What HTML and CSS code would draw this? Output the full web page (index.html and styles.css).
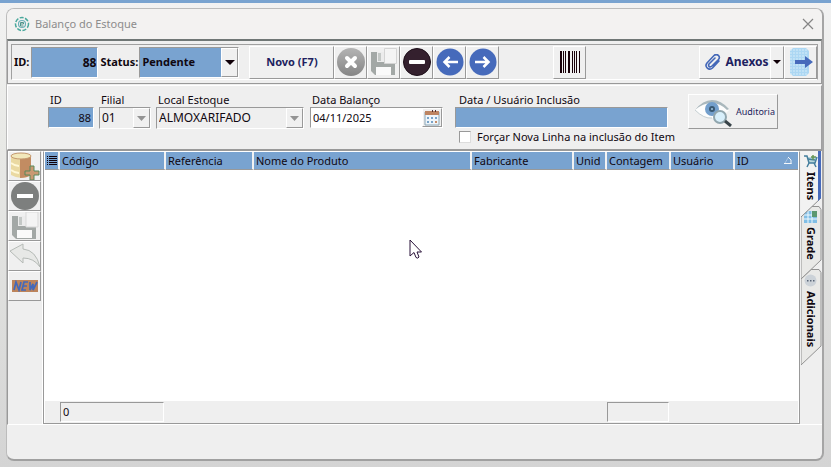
FILE: index.html
```html
<!DOCTYPE html>
<html lang="pt-BR">
<head>
<meta charset="utf-8">
<meta name="viewport" content="width=device-width, initial-scale=1">
<title>Balanço do Estoque</title>
<link rel="stylesheet" href="styles.css">
</head>
<body>
<main class="window">
  <header class="titlebar">
    <svg class="logo" width="16" height="16" viewBox="0 0 16 16" fill="none"><circle cx="8" cy="8" r="6.5" stroke="#4aa89c" stroke-width="1.5" stroke-dasharray="4 1.5"/><circle cx="8" cy="8" r="3.5" stroke="#6bb0b8" stroke-width="1.2"/><path d="M6.5 8h3v-1.500h-3zv2h3" stroke="#4c938a"/></svg>
    <h1>Balanço do Estoque</h1>
    <button class="close" aria-label="Fechar"><svg width="12" height="12" viewBox="0 0 12 12"><path d="M1 1l10 10M11 1L1 11" stroke="#858585" stroke-width="1.200"/></svg></button>
  </header>

  <section class="toolbar-frame">
    <div class="toolbar">
      <label class="strong" for="record">ID:</label>
      <input class="record" id="record" value="88">
      <label class="strong status-label" for="status">Status:</label>
      <span class="select-box status">
        <select id="status"><option>Pendente</option></select>
        <span class="arrow"><svg width="10" height="5" viewBox="0 0 10 5"><path d="M0 0h10L5 5z" fill="#100008"/></svg></span>
      </span>
      <div class="group main-group">
        <button class="tool novo">Novo (F7)</button>
        <button class="tool" aria-label="Cancelar"><svg width="28" height="28" viewBox="0 0 28 28"><defs><linearGradient id="g" x2="0" y2="1"><stop stop-color="#b4b4b4"/><stop offset="1" stop-color="#858585"/></linearGradient></defs><circle cx="14" cy="14" r="14" fill="url(#g)"/><path d="M10 10l8 8M18 10l-8 8" stroke="#fff" stroke-width="4" stroke-linecap="round"/></svg></button>
        <button class="tool" aria-label="Salvar"><svg width="28" height="28" viewBox="0 0 28 28"><path d="M1 4h24v23H5l-4-4z" fill="#a3a8a6"/><path d="M7 4h8v10H7z" fill="#ececec"/><path d="M8 5h3v8H8z" fill="#c4c8c6"/><path d="M6 19h15v8H6z" fill="#fafafa"/><path d="M14.500 .5h12v15h-12z" fill="#f4f4f4" stroke="#d4d4d4"/></svg></button>
        <button class="tool" aria-label="Excluir"><svg width="28" height="28" viewBox="0 0 28 28"><circle cx="14" cy="14" r="13.500" fill="#34202e" stroke="#1c0d18"/><rect x="6" y="12" width="16" height="4" rx="1" fill="#fff"/></svg></button>
        <button class="tool" aria-label="Anterior"><svg width="28" height="28" viewBox="0 0 28 28"><circle cx="14" cy="14" r="13.500" fill="#466abb"/><path d="M22 14H9M13.500 9L8.500 14l5 5" fill="none" stroke="#fff" stroke-width="2.500"/></svg></button>
        <button class="tool" aria-label="Próximo"><svg width="28" height="28" viewBox="0 0 28 28"><circle cx="14" cy="14" r="13.500" fill="#466abb"/><path d="M6 14h13M14.500 9l5 5-5 5" fill="none" stroke="#fff" stroke-width="2.500"/></svg></button>
      </div>
      <button class="tool barcode" aria-label="Código de barras"><svg width="20" height="22" viewBox="0 0 20 22"><path d="M0 0h2v22H0zM3 0h1v22H3zM5 0h1v22H5zM8 0h2v22H8zM12 0h1v22h-1zM14 0h1v22h-1zM16 0h1v22h-1zM19 0h1v22h-1z" fill="#180008"/></svg></button>
      <div class="group end-group">
        <button class="tool anexos"><svg width="16" height="16" viewBox="0 0 16 16" fill="none" stroke="#4468b8" stroke-width="1.600" stroke-linecap="round"><path d="M14 7l-6.500 7C4 17-1 13 2 9l7-7.500c3-2.500 7 1 4.500 4L7 12c-2 2-4.500 0-3-2l6-6M12 8l-3 3.500"/></svg><span>Anexos</span></button>
        <button class="tool more" aria-label="Mais anexos"><svg width="8" height="4" viewBox="0 0 8 4"><path d="M0 0h8L4 4z" fill="#100008"/></svg></button>
        <button class="tool" aria-label="Sair"><svg width="24" height="28" viewBox="0 0 24 28"><path d="M1 3l3-3h13l3 3v22l-3 3H4l-3-3z" fill="#acd7f3"/><path d="M2 1v26M5 1v26M8 1v26M11 1v26M14 1v26M17 1v26" stroke="#d5ecf8" stroke-dasharray="2 1"/><path d="M6 12h10V8l8 6-8 6v-4H6z" fill="#466abb"/></svg></button>
      </div>
    </div>
  </section>

  <section class="form">
    <div class="field f-id"><label for="fid">ID</label><input id="fid" class="sunken blue right" value="88"></div>
    <div class="field f-filial"><label for="filial">Filial</label><span class="select-box"><select id="filial" disabled><option>01</option></select><span class="arrow"><svg width="9" height="5" viewBox="0 0 9 5"><path d="M0 0h9L4.500 5z" fill="#939393"/></svg></span></span></div>
    <div class="field f-local"><label for="local">Local Estoque</label><span class="select-box"><select id="local" disabled><option>ALMOXARIFADO</option></select><span class="arrow"><svg width="9" height="5" viewBox="0 0 9 5"><path d="M0 0h9L4.500 5z" fill="#939393"/></svg></span></span></div>
    <div class="field f-data"><label for="data">Data Balanço</label>
      <div class="date"><input id="data" value="04/11/2025"><button aria-label="Abrir calendário"><svg width="16" height="16" viewBox="0 0 16 16"><path d="M1 2h14v13H1z" fill="#eef5fa" stroke="#8aa5b5"/><path d="M1 1h14v4H1z" fill="#bd8461"/><path d="M8 0h1v2H8zM11 0h1v2h-1z" fill="#503030"/><path d="M3 7h2v2H3zM7 7h2v2H7zM11 7h2v2h-2zM3 11h2v2H3zM7 11h2v2H7z" fill="#79a3c8"/><path d="M11 11h2v2h-2z" fill="#c58c69"/></svg></button></div>
    </div>
    <div class="inclusion">
      <div class="field"><label for="incl">Data / Usuário Inclusão</label><input id="incl" class="sunken blue"></div>
      <label class="check"><input type="checkbox"><span>Forçar Nova Linha na inclusão do Item</span></label>
    </div>
    <button class="audit"><svg width="38" height="30" viewBox="0 0 38 30"><path d="M1 13Q10 4 18 5t17 8Q28 22 17 21 8 20 1 13z" fill="#fdfdfd"/><path d="M1 13Q9 3 18 3t17 9l-2 1Q26 6 18 6 9 6 1 13z" fill="#aab8bd"/><path d="M1 13q9 9 17 8" fill="none" stroke="#c5cfd2"/><circle cx="18" cy="12" r="7" fill="#739fcc"/><circle cx="18" cy="12" r="3" fill="#395872"/><circle cx="18" cy="12" r="1" fill="#a1c5e1"/><circle cx="26" cy="20" r="6" fill="#d8effb" stroke="#91a6ae" stroke-width="2"/><path d="M31 24l6 5" stroke="#394449" stroke-width="3"/></svg><span>Auditoria</span></button>
  </section>

  <section class="work">
    <nav class="side">
      <button class="tool" aria-label="Inserir item"><svg width="30" height="28" viewBox="0 0 30 28"><path d="M1 4q9-6 20 0v19q-9 6-20 0z" fill="#ead9a2"/><path d="M10 5h11v18q-4 3-11 3z" fill="#c28c62"/><ellipse cx="11" cy="4" rx="10" ry="3" fill="#f2e8bb" stroke="#c59a70"/><path d="M1 11q4 3 8 3M1 18q4 3 8 3" stroke="#fff8d7" fill="none" stroke-width="2"/><path d="M20 14h4v5h5v4h-5v5h-4v-5h-5v-4h5z" fill="#c99972" stroke="#59895a"/></svg></button>
      <button class="tool" aria-label="Excluir item"><svg width="28" height="28" viewBox="0 0 28 28"><circle cx="14" cy="14" r="14" fill="#7d7f7e"/><rect x="6" y="12" width="16" height="4" fill="#fff"/></svg></button>
      <button class="tool" aria-label="Salvar item"><svg width="28" height="28" viewBox="0 0 28 28"><path d="M1 4h24v23H5l-4-4z" fill="#a3a8a6"/><path d="M7 4h8v10H7z" fill="#ececec"/><path d="M8 5h3v8H8z" fill="#c4c8c6"/><path d="M6 18h15v8H6z" fill="#fafafa"/><path d="M15 0h12v15H15z" fill="#f4f4f4" stroke="#d9d9d9"/></svg></button>
      <button class="tool" aria-label="Desfazer"><svg width="30" height="28" viewBox="0 0 30 28"><path d="M0 9L13 2v5q13 1 17 18-6-9-17-9v5z" fill="#e7e8e6" stroke="#b5bab6"/></svg></button>
      <button class="tool" aria-label="Novo item"><svg width="26" height="12" viewBox="0 0 26 12"><path d="M0 0h26v12H0z" fill="#bd845b"/><path d="M2 10l2-8 3 8 2-8M16 2h-4l-2 8h4M11 6h4M18 2v8l3-6v6l4-8" fill="none" stroke="#4369ba" stroke-width="1.700"/></svg></button>
    </nav>
    <div class="grid">
      <table>
        <colgroup><col class="c-menu"><col class="c-code"><col class="c-ref"><col><col class="c-fab"><col class="c-unid"><col class="c-user"><col class="c-user"><col class="c-id"></colgroup>
        <thead><tr><th aria-label="Colunas"><svg width="10" height="9" viewBox="0 0 10 9"><path d="M0 .5h1M2 .5h8M0 2.500h1M2 2.500h8M0 4.500h1M2 4.500h8M0 6.500h1M2 6.500h8M0 8.500h1M2 8.500h8" stroke="#100008"/></svg></th><th>Código</th><th>Referência</th><th>Nome do Produto</th><th>Fabricante</th><th>Unid</th><th>Contagem</th><th>Usuário</th><th><span class="sorted">ID<svg width="8" height="7" viewBox="0 0 8 7"><path d="M0 6.500h7.500M7 7V3L4 0" fill="none" stroke="#f4f7fa"/><path d="M1 6l3-5" stroke="#a9c4e0"/></svg></span></th></tr></thead>
        <tbody><tr><td colspan="9"></td></tr></tbody>
        <tfoot><tr><td></td><td><span class="total">0</span></td><td></td><td></td><td></td><td></td><td><span class="total"></span></td><td></td><td></td></tr></tfoot>
      </table>
      <svg class="cursor" width="13" height="20" viewBox="0 0 13 20"><path d="M1 1v16l4-3.500 2 5q2 1.500 3-.5l-2-5h4.500z" fill="#fff" stroke="#281038"/></svg>
    </div>
    <nav class="tabs">
      <button class="tab itens"><svg class="shape" viewBox="0 0 21 66" preserveAspectRatio="none"><path d="M0 0h20v47L0 66z" fill="#f2f2f2"/><path d="M20 47L0 66" stroke="#8c8c8c"/><path d="M17 0h3v47l-3 3z" fill="#466abb"/></svg><svg width="14" height="14" viewBox="0 0 14 14"><path d="M0 2h3l2 7h6l2-6" fill="#b9d7db" stroke="#467f9e" stroke-width="1.500"/><path d="M5 9l-2 4M10 9l2 4M4 5l7 1" stroke="#467f9e" stroke-width="1.500"/><path d="M9 1v5M7 3h5" stroke="#649453" stroke-width="1.500"/></svg><span>Itens</span></button>
      <button class="tab grade"><svg class="shape" viewBox="0 0 21 74" preserveAspectRatio="none"><path d="M0 10L10 .5h8l2 3V54L0 73z" fill="#e9e9e7" stroke="#929292"/></svg><svg width="13" height="12" viewBox="0 0 13 12"><path d="M0 0h13v12H0z" fill="#81bee5"/><path d="M4 0v12M8 0v12M0 4h13M0 8h13" stroke="#eff9fe"/><path d="M8 0h5v6H8z" fill="#5c9870"/></svg><span>Grade</span></button>
      <button class="tab adic"><svg class="shape" viewBox="0 0 21 97" preserveAspectRatio="none"><path d="M0 10L10 .5h8l2 3V77L0 96z" fill="#e9e9e7" stroke="#929292"/></svg><svg width="13" height="13" viewBox="0 0 13 13"><circle cx="6.500" cy="6.500" r="6" fill="#ccd2d8"/><path d="M3 6h1.500v1.500H3zM6 6h1.500v1.500H6zM9 6h1.500v1.500H9z" fill="#586476"/></svg><span>Adicionais</span></button>
    </nav>
  </section>
</main>
</body>
</html>
```
FILE: styles.css
```css
* { box-sizing: border-box; }
body {
  margin: 0;
  min-height: 100vh;
  display: flex;
  padding: 5px 7px 6px 6px;
  border-top: 3px solid #79a3d0;
  background: linear-gradient(#f2f2f2, #e8e9e6 30%, #d4d4d4);
  font: 11px/14px "Noto Sans", sans-serif;
  color: #100810;
}
button, input, select { font: inherit; color: inherit; border-radius: 0; }
button { padding: 0; }
svg { display: block; flex: none; }
.window {
  flex: 1;
  min-width: 0;
  display: flex;
  flex-direction: column;
  border: 1px solid #bcbcbc;
  border-right: 2px solid #a5a5a5;
  border-bottom: 2px solid #a0a0a0;
  border-radius: 8px;
  background: #efefef;
  overflow: hidden;
}
.titlebar { height: 30px; display: flex; align-items: center; padding: 0 8px 0 7px; background: #f3f2f1; }
h1 { margin: 0 0 0 5px; font-size: 11px; line-height: 16px; font-weight: 400; color: #8c8c8c; }
.close { margin-left: auto; border: 0; background: none; }
.toolbar-frame { border: 1px solid #999; border-top: 2px solid #707776; padding: 3px; }
.toolbar { height: 36px; display: flex; align-items: center; border: 1px solid #a0a0a0; border-bottom-color: #fff; padding-left: 2px; }
.strong { font-weight: 700; }
.record { width: 67px; height: 31px; margin: 0 2px; border: 1px solid #999; border-right-color: #fff; border-bottom-color: #fff; background: #79a3d0; text-align: right; font-size: 12px; font-weight: 700; padding: 0 1px; }
.status-label { width: 39px; }
.select-box { display: flex; position: relative; height: 22px; border: 1px solid #999; border-right-color: #fff; border-bottom-color: #fff; }
.select-box select { appearance: none; flex: 1; width: 100%; border: 0; margin: 0; padding: 0 18px 0 2px; background: #efefef; opacity: 1; color: #100810; font-size: 12px; }
.arrow { position: absolute; top: 0; right: 0; bottom: 0; width: 17px; display: flex; align-items: center; justify-content: center; background: #f0f0f0; border: 1px solid #fff; border-right-color: #999; border-bottom-color: #999; pointer-events: none; }
.status { width: 100px; height: 31px; }
.status select { background: #79a3d0; font-size: 11px; font-weight: 700; }
.group { display: flex; }
.tool { width: 33px; height: 33px; display: flex; align-items: center; justify-content: center; background: #f0f0f0; border: 1px solid #fff; border-right-color: #999; border-bottom-color: #999; }
.main-group { margin-left: 10px; }
.novo, .anexos { font-weight: 700; color: #211f60; }
.novo { width: 85px; }
.barcode { margin-left: 54px; }
.end-group { margin-left: auto; }
.anexos { width: 71px; gap: 4px; padding-left: 4px; border-right: 0; font-size: 12px; }
.more { width: 14px; }
.form { height: 65px; margin-top: 1px; border: 1px solid #fff; border-right-color: #a0a0a0; border-bottom-color: #999; display: flex; padding: 7px 0 0 40px; }
.field { display: flex; flex-direction: column; }
.field label { padding-left: 2px; height: 14px; }
.f-id { width: 46px; margin-right: 5px; }
.f-filial { width: 52px; margin-right: 5px; }
.f-local { width: 148px; margin-right: 6px; }
.f-data { width: 133px; margin-right: 12px; }
.sunken { width: 100%; height: 21px; border: 1px solid #999; border-right-color: #fff; border-bottom-color: #fff; padding: 0 2px; }
.blue { background: #79a3d0; }
.right { text-align: right; }
.date { display: flex; height: 21px; border: 1px solid #999; border-right-color: #fff; border-bottom-color: #fff; background: #fff; }
.date input { flex: 1; min-width: 0; border: 0; padding: 0 2px; background: none; }
.date button { width: 20px; display: flex; align-items: center; justify-content: center; background: #f0f0f0; border: 1px solid #fff; border-right-color: #999; border-bottom-color: #999; }
.inclusion { width: 213px; margin-right: 20px; }
.inclusion .field label { padding-left: 4px; }
.check { display: flex; align-items: center; gap: 6px; margin: 2px 0 0 4px; white-space: nowrap; }
.check input { appearance: none; flex: none; margin: 0; width: 12px; height: 12px; background: #fff; border: 1px solid #999; border-right-color: #ddd; border-bottom-color: #ddd; }
.check input:checked { background: #466abb; }
.audit { width: 90px; height: 35px; margin-top: 1px; display: flex; align-items: center; gap: 4px; padding-left: 5px; background: #f0f0f0; border: 1px solid #fff; border-right-color: #999; border-bottom-color: #999; font-size: 9px; color: #24245c; }
.work { flex: 1; margin-bottom: 34px; display: flex; border: 1px solid #999; border-right: 0; border-bottom-color: #fff; }
.side { width: 35px; border-right: 1px solid #fff; }
.side .tool { height: 30px; }
.grid { flex: 1; min-width: 0; display: flex; position: relative; background: #fff; border: 1px solid #999; border-top-color: #fff; padding-left: 1px; padding-right: 1px; }
table { width: 100%; table-layout: fixed; border-collapse: separate; border-spacing: 0; }
th, td { padding: 0; }
th { height: 18px; background: #79a3d0; border-right: 2px solid #f2f2f2; border-bottom: 1px solid #999; text-align: left; font-weight: 400; padding-left: 2px; white-space: nowrap; }
th:last-child { border-right: 0; }
tfoot td { height: 22px; background: #efefef; }
.total { display: block; height: 20px; margin-right: 2px; border: 1px solid #999; border-right-color: #fff; border-bottom-color: #fff; padding: 2px; }
.sorted { display: flex; justify-content: space-between; align-items: center; padding-right: 6px; }
.c-menu { width: 15px; }
.c-code { width: 106px; }
.c-ref { width: 88px; }
.c-fab { width: 102px; }
.c-unid { width: 33px; }
.c-user { width: 64px; }
.c-id { width: 63px; }
.cursor { position: absolute; left: 48.4%; top: 32%; }
.tabs { width: 22px; padding-left: 1px; display: flex; flex-direction: column; }
.tab { position: relative; width: 21px; display: flex; flex-direction: column; align-items: center; gap: 4px; padding: 3px 2px 0 0; border: 0; background: none; font-weight: 700; }
.tab svg, .tab span { position: relative; }
.tab span { writing-mode: vertical-rl; }
.tab .shape { position: absolute; left: 0; top: 0; width: 100%; height: 100%; }
.itens { height: 66px; z-index: 3; }
.grade { height: 74px; margin-top: -11px; padding-top: 5px; z-index: 2; }
.adic { height: 97px; margin-top: -11px; padding-top: 5px; z-index: 1; }
```
